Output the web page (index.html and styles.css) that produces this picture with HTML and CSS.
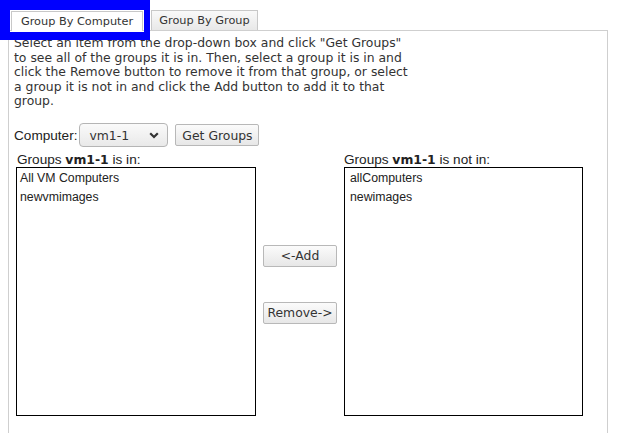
FILE: index.html
```html
<!DOCTYPE html>
<html>
<head>
<meta charset="utf-8">
<link rel="stylesheet" href="styles.css">
</head>
<body>
<div class="tabs">
  <div class="tabbar">
    <div class="tab tab-active">Group By Computer</div>
    <div class="tab">Group By Group</div>
  </div>
  <div class="panel">
    <p class="intro">Select an item from the drop-down box and click "Get Groups" to see all of the groups it is in. Then, select a group it is in and click the Remove button to remove it from that group, or select a group it is not in and click the Add button to add it to that group.</p>
    <div class="picker">
      <span class="picker-label">Computer:</span>
      <div class="select">
        <span class="select-value">vm1-1</span>
        <svg class="chevron" width="10" height="7" viewBox="0 0 10 7"><path d="M1.2 1.2 L5 5 L8.8 1.2" fill="none" stroke="#333" stroke-width="2.2"/></svg>
      </div>
      <button class="btn btn-get">Get Groups</button>
    </div>
    <div class="lists">
      <div class="col">
        <div class="col-label">Groups <b>vm1-1</b> is in:</div>
        <div class="listbox">
          <div class="item">All VM Computers</div>
          <div class="item">newvmimages</div>
        </div>
      </div>
      <div class="mid">
        <button class="btn btn-move btn-add">&lt;-Add</button>
        <button class="btn btn-move btn-remove">Remove-&gt;</button>
      </div>
      <div class="col col-right">
        <div class="col-label">Groups <b>vm1-1</b> is not in:</div>
        <div class="listbox listbox-right">
          <div class="item">allComputers</div>
          <div class="item">newimages</div>
        </div>
      </div>
    </div>
  </div>
</div>
<div class="focus-ring"></div>
</body>
</html>
```
FILE: styles.css
```css
html, body {
  margin: 0;
  padding: 0;
  background: #fff;
  overflow: hidden;
}
body {
  width: 622px;
  height: 433px;
  font-family: "DejaVu Sans", sans-serif;
  color: #333;
}
.tabs {
  margin: 10px 0 0 8px;
  width: 600px;
}
.tabbar {
  display: flex;
  align-items: flex-end;
  height: 20px;
}
.tab {
  box-sizing: border-box;
  height: 20px;
  border: 1px solid #c8c8c8;
  border-bottom: none;
  font-size: 11.3px;
  line-height: 19px;
  color: #333;
  background: linear-gradient(#f9f9f9, #e8e8e8);
  text-align: center;
}
.tab-active {
  position: relative;
  z-index: 1;
  margin-left: 3px;
  width: 132px;
  margin-bottom: -1px;
  background: #fff;
}
.tab + .tab {
  margin-left: 8px;
  width: 107px;
}
.panel {
  box-sizing: border-box;
  border: 1px solid #cfcfcf;
  border-bottom: none;
  height: 403px;
  padding: 5px 0 0 5px;
}
.intro {
  margin: 0;
  width: 400px;
  font-size: 12.4px;
  line-height: 14.5px;
  color: #333;
}
.picker {
  display: flex;
  align-items: center;
  margin-top: 14.5px;
  height: 24px;
}
.picker-label {
  font-family: "Liberation Sans", Arial, sans-serif;
  font-size: 13.6px;
  color: #222;
  margin-right: 2px;
}
.select {
  box-sizing: border-box;
  width: 89px;
  height: 24px;
  border: 1px solid #b5b5b5;
  border-radius: 4px;
  background: linear-gradient(#fafafa, #e9e9e9);
  display: flex;
  align-items: center;
  justify-content: space-between;
  padding: 0 8px 0 9px;
  font-size: 12.4px;
  color: #333;
}
.chevron {
  display: block;
}
.btn {
  box-sizing: border-box;
  font-family: "DejaVu Sans", sans-serif;
  font-size: 12.4px;
  color: #333;
  border: 1px solid #b8b8b8;
  border-radius: 2px;
  background: linear-gradient(#fbfbfb, #e7e7e7);
  padding: 0;
  margin: 0;
  height: 22px;
}
.btn-get {
  margin-left: 7px;
  width: 84px;
}
.lists {
  display: flex;
  margin-top: 4.5px;
  margin-left: 2px;
}
.col-label {
  font-family: "Liberation Sans", Arial, sans-serif;
  font-size: 13.6px;
  line-height: 15px;
  color: #222;
  padding-left: 1px;
}
.col-label b {
  font-family: "DejaVu Sans", sans-serif;
  font-size: 12.4px;
  font-weight: bold;
}
.col-right .col-label {
  padding-left: 0;
}
.listbox {
  box-sizing: border-box;
  width: 240px;
  height: 249px;
  border: 1px solid #000;
  padding-top: 1px;
}
.listbox-right {
  width: 239px;
}
.item {
  font-family: "Liberation Sans", Arial, sans-serif;
  font-size: 12.3px;
  line-height: 19px;
  height: 19px;
  padding-left: 3px;
  color: #222;
}
.listbox-right .item {
  padding-left: 5px;
}
.mid {
  width: 88px;
  display: flex;
  flex-direction: column;
  align-items: center;
  padding-top: 93px;
}
.btn-move {
  width: 74px;
}
.btn-remove {
  margin-top: 35px;
}
.focus-ring {
  position: absolute;
  left: 0;
  top: 0;
  box-sizing: border-box;
  width: 150px;
  height: 40px;
  border-style: solid;
  border-color: #0000ff;
  border-width: 10px 6px 8px 10px;
  z-index: 5;
}
```
